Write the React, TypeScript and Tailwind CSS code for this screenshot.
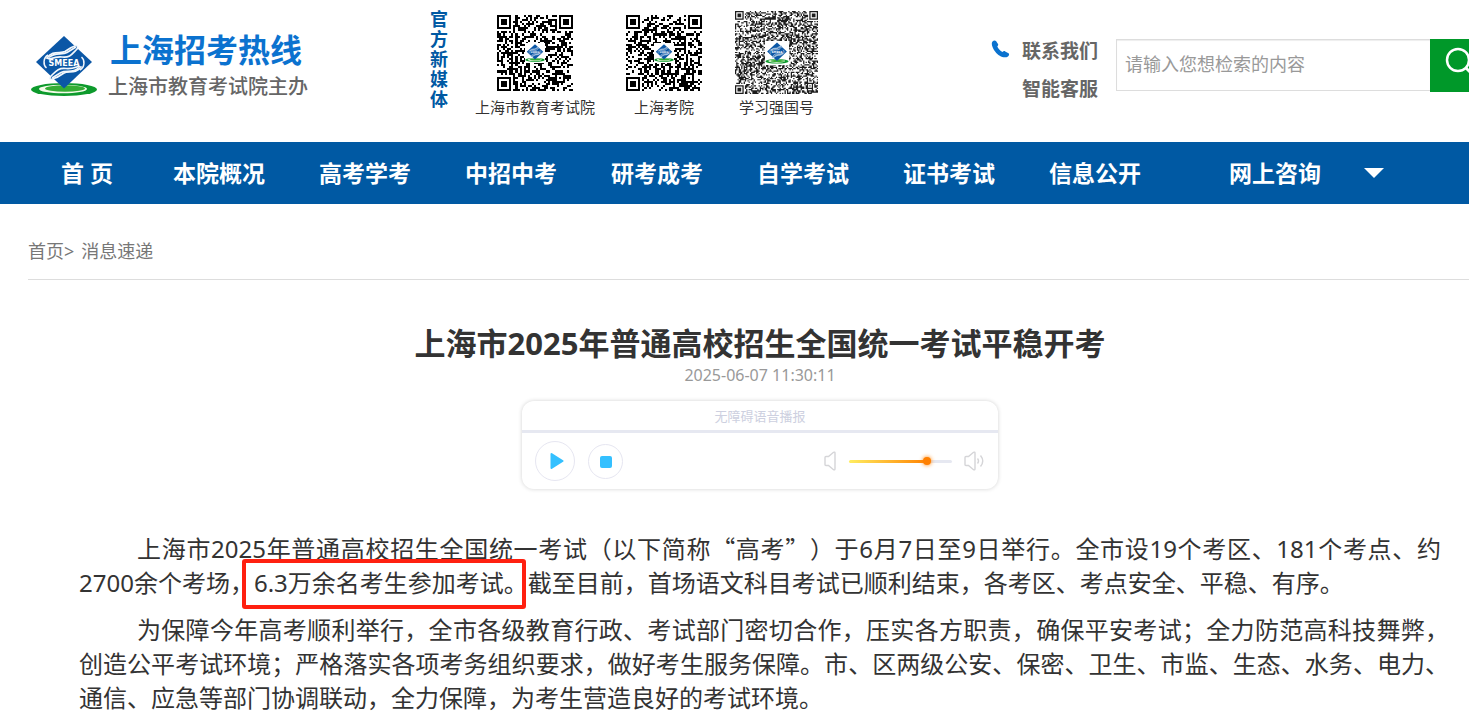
import { useState } from "react";

const CJK = "font-['Noto_Sans_CJK_SC',sans-serif]";

function Emblem({ className }: { className: string }) {
  return (
    <svg viewBox="0 0 68 64" className={className} aria-hidden="true">
      <ellipse cx="34" cy="55.500" rx="33" ry="6.5" fill="#0d9a2c" />
      <ellipse cx="33" cy="55" rx="24" ry="4.300" fill="#f4fbe9" />
      <ellipse cx="35" cy="54.500" rx="20" ry="3.200" fill="#35ad35" />
      <path d="M34 2 62 28 34 54.500 6 28Z" fill="#0b57a6" />
      <path
        d="M17 24C22 16 31 20 35 17.500C39 14.500 41 13 46 11.500C48.500 12 48 14.500 46.500 15.500C42 20 40 24 32 23C26 22.500 23 24 20 25Z"
        fill="#0b57a6"
        stroke="#f2f7fc"
        strokeWidth="1.700"
      />
      <path
        d="M51 33C46 40.500 38 36.500 34 39C30 42 27 44 21 45.500C19 45 20 43 21.500 41.500C26 37 29 33.500 36 34.500C42 35 45 33.500 48 32.500Z"
        fill="#0b57a6"
        stroke="#f2f7fc"
        strokeWidth="1.700"
      />
      <path d="M19 23.500C25 17.500 32 21.500 37 18.500L46 13M49 33.500C43 39.500 36 36 31 38.500L22 44" fill="none" stroke="#f2f7fc" strokeWidth="1.600" />
      <path d="M18 21C13 24 13 31 16.500 34M50 36C55 33 55 26 51.500 23" fill="none" stroke="#f2f7fc" strokeWidth="1.500" />
      <text
        x="34"
        y="31.500"
        textAnchor="middle"
        fontSize="8"
        fontWeight="700"
        fontFamily="DejaVu Sans, sans-serif"
        fill="#ffffff"
      >
        SMEEA
      </text>
    </svg>
  );
}

function qrPath(n: number, seed: number) {
  let s = seed;
  const rand = () => {
    s = (s * 1103515245 + 12345) % 2147483648;
    return s / 2147483648;
  };
  const finder = (x: number, y: number) => {
    const d = Math.max(Math.abs(x - 3), Math.abs(y - 3));
    return d === 3 || d <= 1;
  };
  let d = "";
  for (let y = 0; y < n; y++) {
    for (let x = 0; x < n; x++) {
      const r = rand() < 0.5;
      let on = r;
      const left = x < 8;
      const right = x >= n - 8;
      const top = y < 8;
      const bottom = y >= n - 8;
      if (left && top) on = finder(x, y);
      else if (right && top) on = finder(x - n + 7, y);
      else if (left && bottom) on = finder(x, y - n + 7);
      else if (Math.abs(x - n + 7) <= 2 && Math.abs(y - n + 7) <= 2) {
        on = Math.max(Math.abs(x - n + 7), Math.abs(y - n + 7)) !== 1;
      }
      if (on) d += `M${x} ${y}h1v1h-1z`;
    }
  }
  return d;
}

function QrCode({
  size,
  seed,
  label,
  className,
  markClass,
}: {
  size: number;
  seed: number;
  label: string;
  className: string;
  markClass: string;
}) {
  return (
    <div className={`relative flex items-center justify-center ${className}`} role="img" aria-label={label}>
      <svg viewBox={`0 0 ${size} ${size}`} className="h-full w-full">
        <path d={qrPath(size, seed)} fill={size < 50 ? "#000000" : "#1c1c1c"} shapeRendering={size < 50 ? "crispEdges" : "auto"} />
      </svg>
      <span className={`absolute flex items-center justify-center bg-white ${markClass}`}>
        <Emblem className="h-full w-full" />
      </span>
    </div>
  );
}

const navItems = ["本院概况", "高考学考", "中招中考", "研考成考", "自学考试", "证书考试", "信息公开"];

function Header() {
  return (
    <header className="flex h-[142px] items-start">
      <a href="#" className="mt-[34px] ml-[30px] flex w-[400px] shrink-0 items-start">
        <Emblem className="h-16 w-[68px]" />
        <span className="ml-[10px] flex flex-col">
          <span className="pl-[2px] text-[32px] leading-8 font-bold text-[#0b72cf]">上海招考热线</span>
          <span className="text-[20px] leading-[42px] font-medium text-[#666666]">上海市教育考试院主办</span>
        </span>
      </a>
      <div className="mt-[9px] w-[18px] shrink-0 text-[18px] leading-5 font-bold text-[#0059a3]">官方新媒体</div>
      <div className="ml-[27px] flex shrink-0 text-[15px] leading-6 text-[#333333]">
        <figure className="flex w-[120px] flex-col items-center pt-[15px]">
          <QrCode size={37} seed={20250} label="上海市教育考试院" className="size-[76px]" markClass="h-[20px] w-[20px]" />
          <figcaption className="mt-1">上海市教育考试院</figcaption>
        </figure>
        <figure className="ml-[22px] flex w-[94px] flex-col items-center pt-[15px]">
          <QrCode size={37} seed={7719} label="上海考院" className="size-[76px]" markClass="h-[20px] w-[20px]" />
          <figcaption className="mt-1">上海考院</figcaption>
        </figure>
        <figure className="ml-[24px] flex w-[83px] flex-col items-center pt-[11px]">
          <QrCode size={67} seed={4242} label="学习强国号" className="size-[83px]" markClass="h-[24px] w-[24px]" />
          <figcaption className="mt-px">学习强国号</figcaption>
        </figure>
      </div>
      <div className="mt-8 ml-auto flex shrink-0">
        <svg viewBox="0 0 18 18" className="mt-2 h-[18px] w-[19px]" aria-hidden="true">
          <path
            d="M1 1.500C2 .3 3.600 0 4.500 1L6.500 4C7 5 6.600 5.700 5.800 6.500C6.500 8.500 8.700 10.800 11 12C12 11 12.800 10.900 13.700 11.400L17 13.200C18 14 17.700 15.500 16.500 16.400C13 19 7 16 3.800 11.800C.8 8-.7 3.700 1 1.500Z"
            fill="#0b72cf"
          />
        </svg>
        <div className="ml-3 flex flex-col text-[19px] leading-[38px] font-bold text-[#666666]">
          <a href="#">联系我们</a>
          <a href="#">智能客服</a>
        </div>
      </div>
      <form className="mt-[39px] -mr-[17px] ml-[18px] flex h-[53px] shrink-0" onSubmit={(e) => e.preventDefault()}>
        <input
          type="text"
          aria-label="搜索内容"
          placeholder="请输入您想检索的内容"
          className="h-[52px] w-[314px] border border-r-0 border-[#dddddd] px-2 pb-[2px] text-[18px] text-[#333333] shadow-[inset_0_1px_1px_#eeeeee] outline-none placeholder:text-[#999999]"
        />
        <button type="submit" aria-label="搜索" className="flex w-14 justify-center bg-[#009829] pt-2">
          <svg viewBox="0 0 30 30" className="-mr-1 size-[30px]" aria-hidden="true">
            <circle cx="13" cy="13" r="11" fill="none" stroke="#ffffff" strokeWidth="2.500" />
            <path d="M20.500 20.500 28 28" stroke="#ffffff" strokeWidth="3" />
          </svg>
        </button>
      </form>
    </header>
  );
}

function Nav() {
  return (
    <nav className="flex h-[62px] items-center bg-[#0059a3] pl-7 text-[23px] font-bold text-white">
      <a href="#" className="w-[118px] shrink-0 text-center whitespace-pre">
        首 页
      </a>
      {navItems.map((item) => (
        <a key={item} href="#" className="w-[146px] shrink-0 text-center">
          {item}
        </a>
      ))}
      <button type="button" className="ml-[61px] flex shrink-0 items-center gap-[43px]">
        网上咨询
        <svg viewBox="0 0 20 10" className="h-[10px] w-5" aria-hidden="true">
          <path d="M0 0H20L10 10Z" fill="#ffffff" />
        </svg>
      </button>
    </nav>
  );
}

function Player() {
  const [volume, setVolume] = useState(78);
  return (
    <section
      aria-label="无障碍语音播报"
      className="mx-auto mt-4 h-[88px] w-[476px] rounded-xl bg-white shadow-[0_0_4px_rgba(0,0,0,0.18)]"
    >
      <div className="h-[29px] text-center text-[13px] leading-[31px] text-[#cdd0e0]">无障碍语音播报</div>
      <div className="h-[3px] bg-[#e6e8f1]" />
      <div className="flex h-14 items-center pr-[14px] pl-[13px]">
        <button
          type="button"
          aria-label="播放"
          className="flex size-10 items-center justify-center rounded-full border border-[#e6e6f1] pl-[3px]"
        >
          <svg viewBox="0 0 14 16" className="h-4 w-[14px]" aria-hidden="true">
            <path d="M1.500 1 12.500 8 1.500 15Z" fill="#34c0ff" stroke="#34c0ff" strokeWidth="2" strokeLinejoin="round" />
          </svg>
        </button>
        <button
          type="button"
          aria-label="停止"
          className="ml-[13px] flex size-[35px] items-center justify-center rounded-full border border-[#e6e6f1] pt-[2px]"
        >
          <span className="size-3 rounded-[2px] bg-[#34c0ff]" />
        </button>
        <svg viewBox="0 0 12 20" className="ml-auto h-5 w-3" fill="none" stroke="#d5d5d8" strokeWidth="1.400" aria-hidden="true">
          <path d="M1 6.500Q1 5.500 2 5.500H4.500L9.500 1.300Q11 .6 11 2.200V17.800Q11 19.400 9.500 18.700L4.500 14.500H2Q1 14.500 1 13.500Z" />
        </svg>
        <input
          type="range"
          aria-label="音量"
          min={0}
          max={100}
          value={volume}
          onChange={(e) => setVolume(Number(e.target.value))}
          style={{
            backgroundImage: `linear-gradient(90deg,#ffed60 0%,#ff8000 ${volume}%,#e6e8f1 ${volume}%)`,
          }}
          className="mr-3 ml-[13px] h-[3px] w-[103px] appearance-none rounded-full [&::-webkit-slider-thumb]:size-2 [&::-webkit-slider-thumb]:appearance-none [&::-webkit-slider-thumb]:rounded-full [&::-webkit-slider-thumb]:bg-[#ff8000] [&::-webkit-slider-thumb]:shadow-[0_0_4px_#ff8000]"
        />
        <svg viewBox="0 0 20 20" className="size-5" fill="none" stroke="#d5d5d8" strokeWidth="1.400" aria-hidden="true">
          <path d="M1 6.500Q1 5.500 2 5.500H4.500L9.500 1.300Q11 .6 11 2.200V17.800Q11 19.400 9.500 18.700L4.500 14.500H2Q1 14.500 1 13.500Z" />
          <path d="M13.500 7.500Q15.500 10 13.500 12.500M16.500 4.500Q21 10 16.500 15.500" />
        </svg>
      </div>
    </section>
  );
}

export default function App() {
  return (
    <div className="min-h-[720px] overflow-hidden bg-white font-['Noto_Sans','Noto_Sans_CJK_SC',sans-serif] text-[#333333]">
      <Header />
      <Nav />
      <div className="ml-7 flex h-[76px] items-center border-b border-[#dddddd] pt-5 text-[18px] text-[#777777]">
        <a href="#">首页</a>
        <span className="mr-[7px]">&gt;</span>
        <a href="#">消息速递</a>
      </div>
      <main className="pt-[41px] pr-7 pl-[79px]">
        <h1 className="text-center text-[31px] leading-[44px] font-bold">上海市2025年普通高校招生全国统一考试平稳开考</h1>
        <time className="block text-center text-[16px] leading-5 text-[#999999]">2025-06-07 11:30:11</time>
        <Player />
        <article className="-mr-2 mt-[42px] flex flex-col gap-[13px] text-justify text-[24px] leading-[34px]">
          <p className="pr-2 indent-[58px]">
            上海市2025年普通高校招生全国统一考试（以下简称
            <span className={`[text-spacing-trim:space-all] ${CJK}`}>“高考”）</span>
            于6月7日至9日举行。全市设19个考区、181个考点、约2700余个考场，
            <span className="relative">
              6.3万余名考生参加考试。
              <span className="absolute -top-[7px] right-[2px] -bottom-[10px] -left-3 rounded-[3px] border-4 border-[#ff2010]" />
            </span>
            截至目前，首场语文科目考试已顺利结束，各考区、考点安全、平稳、有序。
          </p>
          <p className="indent-[58px]">
            为保障今年高考顺利举行，全市各级教育行政、考试部门密切合作，压实各方职责，确保平安考试；全力防范高科技舞弊，创造公平考试环境；严格落实各项考务组织要求，做好考生服务保障。市、区两级公安、保密、卫生、市监、生态、水务、电力、通信、应急等部门协调联动，全力保障，为考生营造良好的考试环境。
          </p>
        </article>
      </main>
    </div>
  );
}
